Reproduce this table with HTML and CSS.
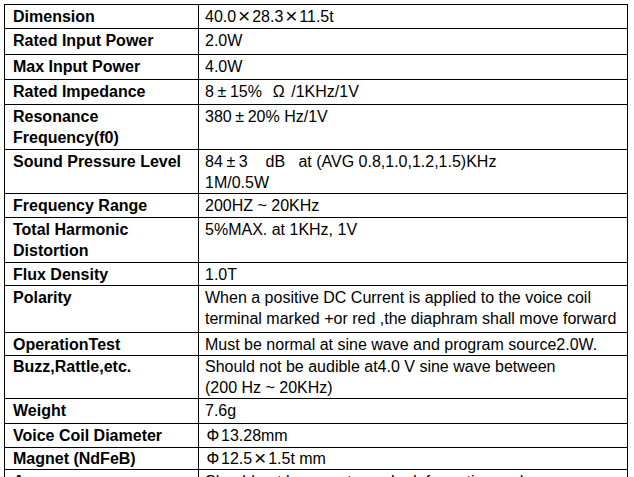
FILE: index.html
```html
<!DOCTYPE html>
<html>
<head>
<meta charset="utf-8">
<link rel="stylesheet" href="styles.css">
</head>
<body>
<div class="sheet">
<table class="spec">
  <colgroup><col class="c-label"><col class="c-value"></colgroup>
  <tr><td class="lbl">Dimension</td><td>40.0<span class="fw x">×</span>28.3<span class="fw x">×</span>11.5t</td></tr>
  <tr class="p2"><td class="lbl">Rated Input Power</td><td>2.0W</td></tr>
  <tr class="p1"><td class="lbl">Max Input Power</td><td>4.0W</td></tr>
  <tr class="p1"><td class="lbl">Rated Impedance</td><td>8<span class="fw">±</span>15%&nbsp; <span class="fw">Ω</span> /1KHz/1V</td></tr>
  <tr><td class="lbl">Resonance<br>Frequency(f0)</td><td>380<span class="fw">±</span>20% Hz/1V</td></tr>
  <tr class="m1"><td class="lbl">Sound Pressure Level</td><td>84<span class="fw">±</span>3&nbsp;&nbsp;&nbsp; dB&nbsp;&nbsp; at (AVG 0.8,1.0,1.2,1.5)KHz<br>1M/0.5W</td></tr>
  <tr><td class="lbl">Frequency Range</td><td>200HZ ~ 20KHz</td></tr>
  <tr><td class="lbl">Total Harmonic<br>Distortion</td><td>5%MAX. at 1KHz, 1V</td></tr>
  <tr class="m1"><td class="lbl">Flux Density</td><td>1.0T</td></tr>
  <tr class="p2"><td class="lbl">Polarity</td><td>When a positive DC Current is applied to the voice coil<br>terminal marked +or red ,the diaphram shall move forward</td></tr>
  <tr class="m1"><td class="lbl">OperationTest</td><td>Must be normal at sine wave and program source2.0W.</td></tr>
  <tr class="m2"><td class="lbl">Buzz,Rattle,etc.</td><td>Should not be audible at4.0 V sine wave between<br>(200 Hz ~ 20KHz)</td></tr>
  <tr class="p1"><td class="lbl">Weight</td><td>7.6g</td></tr>
  <tr><td class="lbl">Voice Coil Diameter</td><td><span class="fw">Φ</span>13.28mm</td></tr>
  <tr class="m2"><td class="lbl">Magnet (NdFeB)</td><td><span class="fw">Φ</span>12.5<span class="fw x">×</span>1.5t mm</td></tr>
  <tr><td class="lbl">Appearance</td><td>Should not have rust, crack, deformation and so on</td></tr>
</table>
</div>
</body>
</html>
```

FILE: styles.css
```css
html, body {
  margin: 0;
  padding: 0;
  background: #fff;
}

body {
  font-family: "Liberation Sans", Arial, sans-serif;
  color: #000;
  overflow: hidden;
}

.sheet {
  padding: 4px 0 0 4px;
}

.spec {
  border-collapse: collapse;
  width: 624px;
  table-layout: fixed;
  font-size: 16px;
  line-height: 21px;
}

.c-label { width: 194px; }

.spec td {
  border: 1px solid #000;
  padding: 1px 4px 1px 6px;
  vertical-align: top;
  white-space: nowrap;
}

.spec td.lbl {
  font-weight: bold;
  padding-left: 8px;
}

.spec tr.p1 td { padding-bottom: 2px; }
.spec tr.p2 td { padding-bottom: 3px; }
.spec tr.m1 td { padding-bottom: 0; }
.spec tr.m2 td { padding-top: 0; padding-bottom: 0; }

.fw {
  display: inline-block;
  width: 16px;
  text-align: center;
}

.fw.x {
  font-size: 21px;
  line-height: 16px;
  vertical-align: -1px;
}
```
